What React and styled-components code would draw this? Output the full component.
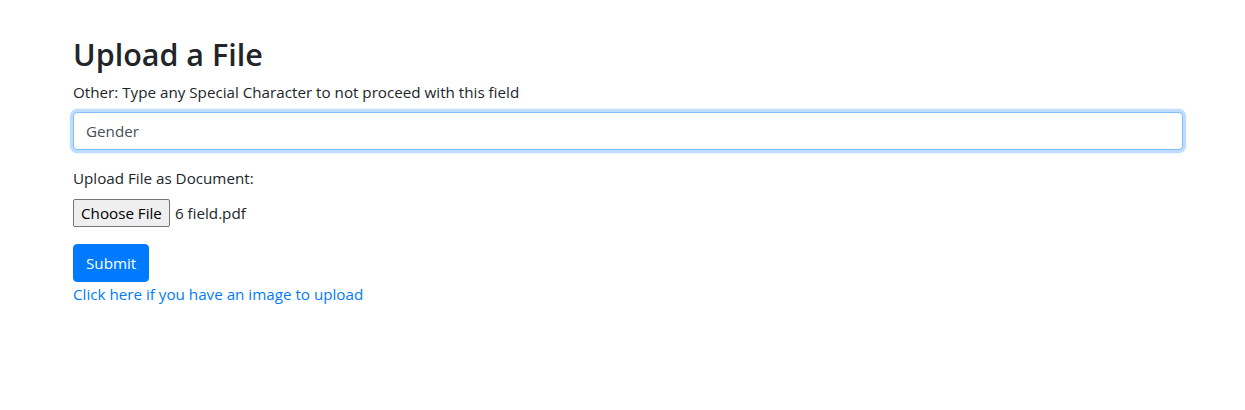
import React from 'react'
import styled, { createGlobalStyle } from 'styled-components'

const GlobalStyle = createGlobalStyle`
  body {
    margin: 0;
    background: #fff;
    color: #212529;
    font-family: "Open Sans", "Noto Sans", sans-serif;
    font-size: 15.2px;
    line-height: 24px;
  }
`

const Page = styled.div`
  padding: 36px 0 0 73px;
  width: 1110px;
`

const Title = styled.h1`
  margin: 0 0 8px 0;
  font-size: 30.5px;
  font-weight: 600;
  line-height: 36px;
`

const Label = styled.label`
  display: block;
  margin-bottom: ${({ $gap }) => $gap || 8}px;
`

const Group = styled.div`
  margin-bottom: ${({ $gap }) => $gap || 16}px;
`

const TextInput = styled.input`
  display: block;
  box-sizing: border-box;
  width: 100%;
  height: 38px;
  padding: 6px 12px;
  font: inherit;
  color: #495057;
  background: #fff;
  border: 1px solid #80bdff;
  border-radius: 4px;
  outline: 0;
  box-shadow: 0 0 0 3.2px rgba(0, 123, 255, 0.25);
`

const FileRow = styled.div`
  display: flex;
  align-items: center;
  gap: 5px;
`

const FileButton = styled.label`
  display: inline-flex;
  align-items: center;
  height: 28px;
  box-sizing: border-box;
  padding: 0 7px;
  background: #efefef;
  border: 1px solid #767676;
  border-radius: 2px;
  color: #000;
  cursor: pointer;
`

const SubmitButton = styled.button`
  display: block;
  height: 38px;
  padding: 6px 12px;
  font: inherit;
  color: #fff;
  background: #007bff;
  border: 1px solid #007bff;
  border-radius: 4px;
  cursor: pointer;
`

const Link = styled.a`
  color: #007bff;
  text-decoration: none;
`

export default function App() {
  return (
    <>
      <GlobalStyle />
      <Page>
        <Title>Upload a File</Title>
        <Group>
          <Label htmlFor="other">Other: Type any Special Character to not proceed with this field</Label>
          <TextInput id="other" defaultValue="Gender" autoFocus />
        </Group>
        <Group $gap={17}>
          <Label $gap={9}>Upload File as Document:</Label>
          <FileRow>
            <FileButton>Choose File</FileButton>
            <span>6 field.pdf</span>
          </FileRow>
        </Group>
        <SubmitButton type="button">Submit</SubmitButton>
        <Link href="#">Click here if you have an image to upload</Link>
      </Page>
    </>
  )
}
